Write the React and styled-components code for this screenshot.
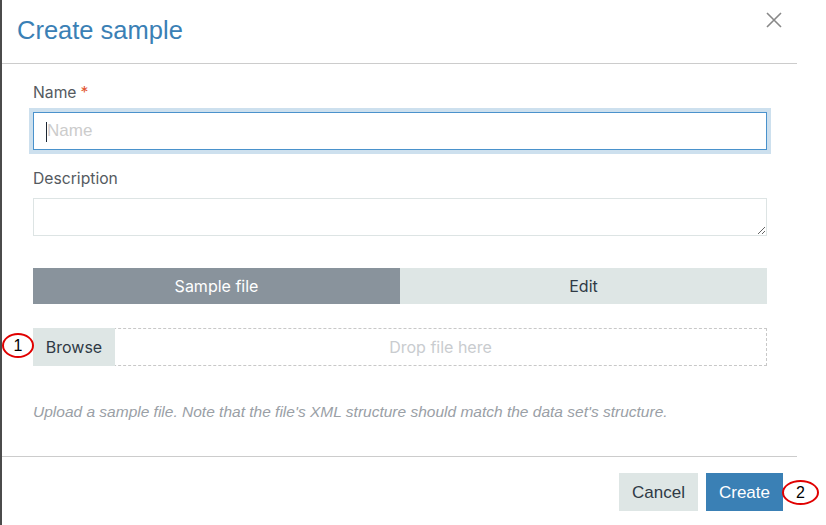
import React from 'react'
import styled, { createGlobalStyle } from 'styled-components'

const GlobalStyle = createGlobalStyle`
  html, body {
    margin: 0;
    padding: 0;
    background: #fff;
  }
  body {
    font-family: Inter, "Liberation Sans", Arial, sans-serif;
  }
`

const Page = styled.div`
  position: relative;
  width: 826px;
  height: 525px;
  overflow: hidden;
  background: #fff;
`

const Modal = styled.div`
  width: 795px;
  height: 525px;
  border-left: 2px solid #4b4b4b;
  background: #fff;
  display: flex;
  flex-direction: column;
`

const Header = styled.header`
  height: 64px;
  border-bottom: 1px solid #cccccc;
  display: flex;
  align-items: flex-start;
  justify-content: space-between;
  padding: 0 15px 0 15px;
  box-sizing: border-box;
`

const Title = styled.h1`
  margin: 15px 0 0;
  font-family: "Liberation Sans", Arial, sans-serif;
  font-weight: 400;
  font-size: 25.5px;
  line-height: 30px;
  color: #3a80b5;
`

const CloseButton = styled.button`
  margin-top: 12px;
  width: 16px;
  height: 16px;
  padding: 0;
  border: 0;
  background: none;
  cursor: pointer;
  display: flex;
`

const Body = styled.div`
  padding: 19px 30px 0 31px;
  display: flex;
  flex-direction: column;
`

const Label = styled.label`
  font-size: 15.7px;
  line-height: 20px;
  color: #555a60;
  margin-bottom: 9px;
`

const Required = styled.span`
  color: #e2532d;
  margin-left: 4px;
`

const TextInput = styled.input`
  box-sizing: border-box;
  height: 38px;
  width: 100%;
  border: 1px solid #4a92cc;
  box-shadow: 0 0 0 4px #cde0ee;
  outline: none;
  padding: 0 13px;
  font-family: "Liberation Sans", Arial, sans-serif;
  font-size: 17px;
  color: #333;
  margin-bottom: 19px;
  &::placeholder {
    color: #cccccc;
  }
`

const TextArea = styled.textarea`
  box-sizing: border-box;
  height: 38px;
  width: 100%;
  border: 1px solid #dde4e4;
  resize: vertical;
  outline: none;
  font-family: inherit;
  margin: 0 0 32px;
  display: block;
`

const Tabs = styled.div`
  display: grid;
  grid-template-columns: 1fr 1fr;
  height: 36px;
  margin-bottom: 24px;
`

const Tab = styled.div`
  display: flex;
  align-items: center;
  justify-content: center;
  font-size: 16px;
  background: ${p => (p.$active ? '#89939c' : '#dee6e5')};
  color: ${p => (p.$active ? '#fff' : '#2f3a45')};
`

const DropZone = styled.div`
  display: flex;
  height: 38px;
  box-sizing: border-box;
  border: 1px dashed #c8c8c8;
  margin-bottom: 36px;
`

const BrowseButton = styled.div`
  margin: -1px 0 -1px -1px;
  width: 82px;
  background: #dee6e5;
  color: #2f3a45;
  font-size: 16px;
  display: flex;
  align-items: center;
  justify-content: center;
`

const DropHint = styled.div`
  flex: 1;
  display: flex;
  align-items: center;
  justify-content: center;
  color: #c9cccf;
  font-size: 16px;
`

const Help = styled.p`
  margin: 0;
  font-family: "Liberation Sans", Arial, sans-serif;
  font-style: italic;
  font-size: 15.5px;
  line-height: 20px;
  color: #9aa0a6;
`

const Footer = styled.footer`
  margin-top: 34px;
  border-top: 1px solid #cccccc;
  padding: 16px 14px 0 0;
  display: flex;
  justify-content: flex-end;
  gap: 8px;
`

const Button = styled.button`
  height: 38px;
  padding: 1px 13px 0;
  border: 0;
  font-family: "Liberation Sans", Arial, sans-serif;
  font-size: 17px;
  background: ${p => (p.$primary ? '#3a80b5' : '#dee6e5')};
  color: ${p => (p.$primary ? '#fff' : '#2f3a45')};
  cursor: pointer;
`

/* numbered callouts drawn over the form */
const Marker = styled.div`
  position: absolute;
  left: ${p => p.$x}px;
  top: ${p => p.$y}px;
  width: ${p => p.$w}px;
  height: 25px;
  box-sizing: border-box;
  border: 2px solid #e00000;
  border-radius: 50%;
  background: #fff;
  display: flex;
  align-items: center;
  justify-content: center;
  font-family: "Liberation Sans", Arial, sans-serif;
  font-size: 16px;
  color: #000;
`

const Caret = styled.span`
  position: absolute;
  left: 46px;
  top: 122px;
  width: 1px;
  height: 20px;
  background: #1c2633;
`

export default function App() {
  return (
    <Page>
      <GlobalStyle />
      <Modal>
        <Header>
          <Title>Create sample</Title>
          <CloseButton aria-label="Close">
            <svg width="16" height="16" viewBox="0 0 16 16">
              <path d="M1 1L15 15M15 1L1 15" stroke="#888" strokeWidth="1.6" />
            </svg>
          </CloseButton>
        </Header>
        <Body>
          <Label>
            Name<Required>*</Required>
          </Label>
          <TextInput placeholder="Name" />
          <Label>Description</Label>
          <TextArea />
          <Tabs>
            <Tab $active>Sample file</Tab>
            <Tab>Edit</Tab>
          </Tabs>
          <DropZone>
            <BrowseButton>Browse</BrowseButton>
            <DropHint>Drop file here</DropHint>
          </DropZone>
          <Help>
            Upload a sample file. Note that the file's XML structure should match the data set's structure.
          </Help>
        </Body>
        <Footer>
          <Button>Cancel</Button>
          <Button $primary>Create</Button>
        </Footer>
      </Modal>
      <Caret />
      <Marker $x={2} $y={333} $w={32}>1</Marker>
      <Marker $x={782} $y={480} $w={37}>2</Marker>
    </Page>
  )
}
